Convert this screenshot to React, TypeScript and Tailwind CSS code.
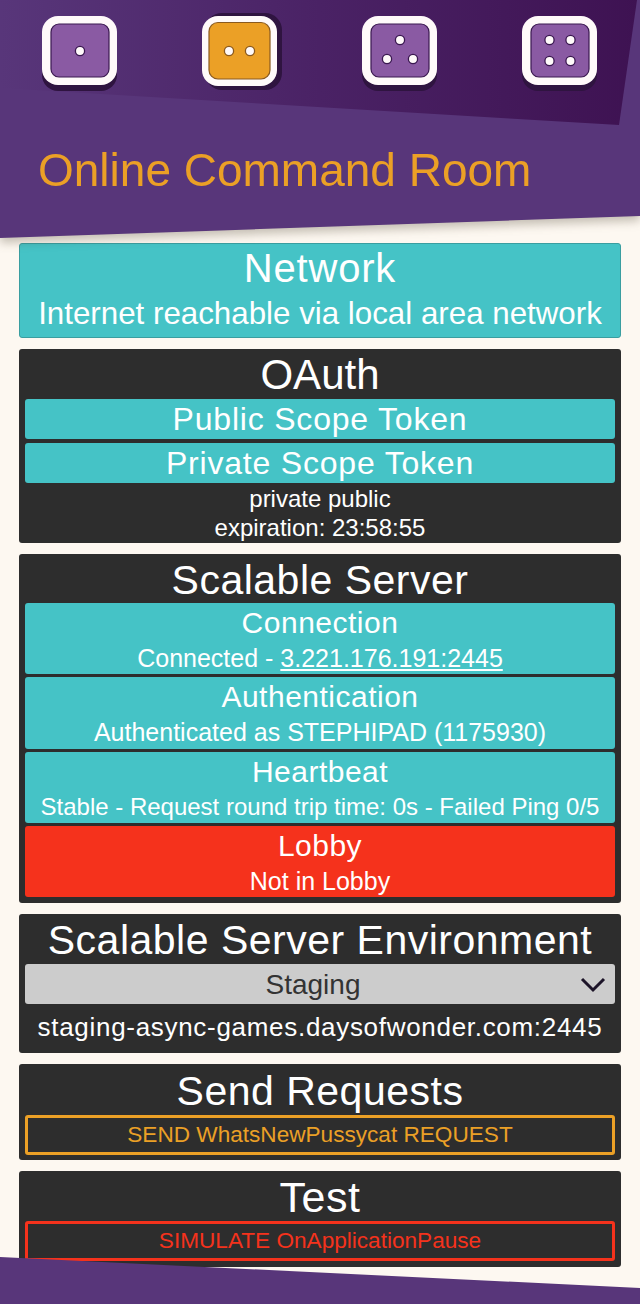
import React from "react";

function Die({ pips, active }: { pips: [number, number][]; active?: boolean }) {
  const stroke = active ? "#8a5a20" : "#3a1850";
  return (
    <svg width="90" height="90" viewBox="0 0 90 90">
      {active ? (
        <>
          <rect x="10" y="3" width="77" height="77" rx="17" fill="#2f1440" />
          <rect x="7" y="6" width="75" height="70" rx="16" fill="#fffafa" />
          <rect x="14" y="12.5" width="61" height="56.5" rx="9" fill="#eba026" stroke={stroke} strokeWidth="1.2" />
        </>
      ) : (
        <>
          <rect x="7" y="11" width="75" height="70" rx="16" fill="#2f1440" />
          <rect x="7" y="6" width="75" height="69" rx="16" fill="#fffafa" />
          <rect x="16" y="14" width="58" height="53" rx="8" fill="#8a5aa3" stroke={stroke} strokeWidth="1.2" />
        </>
      )}
      {pips.map(([x, y], i) => (
        <circle key={i} cx={x} cy={y} r="4.6" fill="#fffafa" stroke={stroke} strokeWidth="1.3" />
      ))}
    </svg>
  );
}

function Section({ children, className = "" }: { children: React.ReactNode; className?: string }) {
  return <section className={`rounded-[3px] bg-[#2d2d2d] px-[6px] text-center text-white ${className}`}>{children}</section>;
}

function Row({ title, sub, red, small, children }: { title: string; sub?: string; red?: boolean; small?: boolean; children?: React.ReactNode }) {
  return (
    <div className={`flex h-[71.25px] flex-col items-center rounded-[3px] text-white ${red ? "bg-[#f5321c]" : "bg-[#45c3c6]"}`}>
      <div className="mt-[2px] text-[30px] leading-[36px] tracking-[0.5px]">{title}</div>
      <div className={`leading-[29px] ${small ? "mt-[2px] text-[24px]" : "mt-[3px] text-[25px]"}`}>{sub}{children}</div>
    </div>
  );
}

export default function App() {
  return (
    <div className="relative h-[1304px] w-[640px] overflow-hidden bg-[#fdf8f1] font-['Liberation_Sans',Arial,sans-serif]">
      <header className="relative h-[243px] [filter:drop-shadow(0_5px_5px_rgba(70,60,40,0.3))]">
        <div className="absolute inset-0 bg-[#58367a] [clip-path:polygon(0_0,100%_0,100%_216px,0_238px)]" />
        <div className="absolute inset-0 bg-gradient-to-r from-[#58367a] via-[#4a2265] to-[#3e1252] [clip-path:polygon(0_88px,0_0,637px_0,619px_125px)]" />
        <div className="relative grid grid-cols-4 justify-items-center pt-[10px]">
          <Die pips={[[45, 41]]} />
          <Die active pips={[[34, 41], [55, 41]]} />
          <Die pips={[[45, 30], [32, 49], [58, 49]]} />
          <Die pips={[[34.5, 30], [55.5, 30], [34.5, 51], [55.5, 51]]} />
        </div>
        <h1 className="relative mt-[45px] pl-[38px] text-[46px] leading-[50px] font-normal text-[#eba026]">Online Command Room</h1>
      </header>

      <main className="flex flex-col gap-[11px] px-[19px]">
        <section className="flex h-[95px] flex-col items-center rounded-[3px] border border-[#3a9ea0] bg-[#45c3c6] text-white">
          <div className="mt-[2px] text-[40px] leading-[45px] tracking-[0.8px]">Network</div>
          <div className="mt-[4px] text-[31.3px] leading-[38px]">Internet reachable via local area network</div>
        </section>

        <Section className="h-[194px]">
          <div className="pt-[3px] pb-[1px] text-[42px] leading-[46px]">OAuth</div>
          <div className="flex flex-col gap-[4px]">
            <div className="flex h-[40px] items-center justify-center rounded-[3px] bg-[#45c3c6] text-[32px] tracking-[0.8px]">Public Scope Token</div>
            <div className="flex h-[40px] items-center justify-center rounded-[3px] bg-[#45c3c6] text-[32px] tracking-[0.8px]">Private Scope Token</div>
          </div>
          <div className="pt-[1px] text-[24px] leading-[29px]">private public<br />expiration: 23:58:55</div>
        </Section>

        <Section className="h-[349px]">
          <div className="pt-[3px] text-[41px] leading-[46px] tracking-[0.5px]">Scalable Server</div>
          <div className="flex flex-col gap-[3px]">
            <Row title="Connection">Connected - <span className="underline">3.221.176.191:2445</span></Row>
            <Row title="Authentication" sub="Authenticated as STEPHIPAD (1175930)" />
            <Row small title="Heartbeat" sub="Stable - Request round trip time: 0s - Failed Ping 0/5" />
            <Row red title="Lobby" sub="Not in Lobby" />
          </div>
        </Section>

        <Section className="h-[139px]">
          <div className="pt-[3px] pb-[1px] text-[41px] leading-[46px] tracking-[0.5px]">Scalable Server Environment</div>
          <div className="relative flex h-[40px] items-center justify-center rounded-[3px] bg-[#cccccc] pt-[1px] pr-[14px] text-[28px] text-[#333]">
            Staging
            <svg className="absolute right-[9px] top-[13px]" width="26" height="16" viewBox="0 0 26 16" fill="none" stroke="#1c1428" strokeWidth="3">
              <path d="M2 2 L13 13 L24 2" />
            </svg>
          </div>
          <div className="pt-[9px] text-[26px] leading-[29px] tracking-[0.7px]">staging-async-games.daysofwonder.com:2445</div>
        </Section>

        <Section className="h-[96px]">
          <div className="pt-[4px] pb-[1px] text-[41px] leading-[46px] tracking-[0.5px]">Send Requests</div>
          <div className="flex h-[40px] items-center justify-center rounded-[3px] border-[3px] border-[#eba026] text-[22.6px] text-[#eba026]">SEND WhatsNewPussycat REQUEST</div>
        </Section>

        <Section className="h-[96px]">
          <div className="pt-[3px] pb-[1px] text-[43px] leading-[46px] tracking-[0.5px]">Test</div>
          <div className="flex h-[40px] items-center justify-center rounded-[3px] border-[3px] border-[#f5321c] text-[22.6px] text-[#f5321c]">SIMULATE OnApplicationPause</div>
        </Section>
      </main>

      <div className="absolute inset-x-0 bottom-0 h-[47px] bg-[#58367a] [clip-path:polygon(0_0,100%_31px,100%_100%,0_100%)]" />
    </div>
  );
}
